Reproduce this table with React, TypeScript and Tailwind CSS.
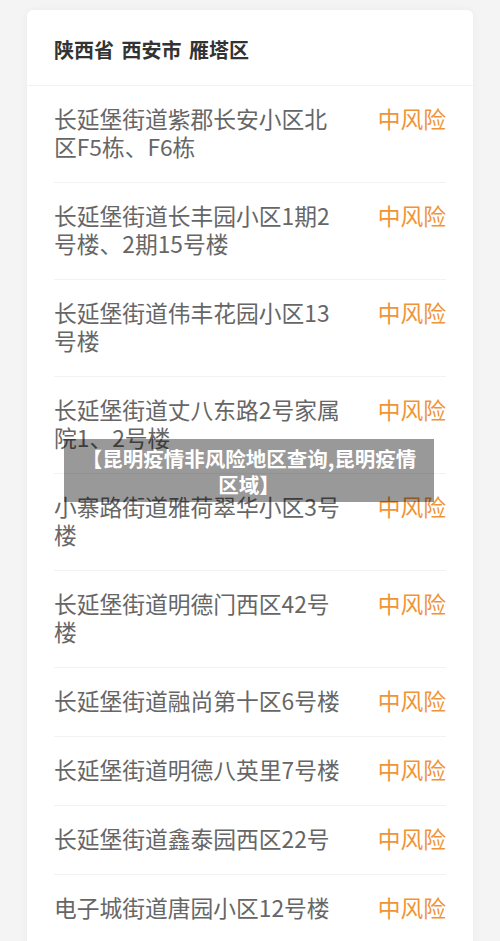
const rows = [
  "长延堡街道紫郡长安小区北区F5栋、F6栋",
  "长延堡街道长丰园小区1期2号楼、2期15号楼",
  "长延堡街道伟丰花园小区13号楼",
  "长延堡街道丈八东路2号家属院1、2号楼",
  "小寨路街道雅荷翠华小区3号楼",
  "长延堡街道明德门西区42号楼",
  "长延堡街道融尚第十区6号楼",
  "长延堡街道明德八英里7号楼",
  "长延堡街道鑫泰园西区22号",
  "电子城街道唐园小区12号楼",
]

export default function App() {
  return (
    <main
      className="relative h-[941px] overflow-hidden bg-[#f4f4f4] px-[27px] pt-[10px]"
      style={{ fontFamily: '"Noto Sans CJK SC", "Noto Sans", sans-serif' }}
    >
      <div className="min-h-[960px] rounded-[6px] bg-white shadow-[0_0_8px_rgba(0,0,0,0.04)]">
        {/* header */}
        <div className="border-b border-[#f2f2f2] px-[27px] pt-[26px] pb-[21px]">
          <h1 className="text-[20px] font-bold leading-[28px] text-[#333] [word-spacing:3px]">
            陕西省 西安市 雁塔区
          </h1>
        </div>

        {/* list */}
        <div className="px-[27px]">
          {rows.map((r, i) => (
            <div
              key={i}
              className="flex items-start justify-between border-b border-[#f2f2f2] pt-[19px] pb-[21px]"
            >
              <p className="w-[294px] text-[22.75px] leading-[28px] text-[#666]">{r}</p>
              <span className="text-[22.75px] leading-[28px] text-[#f09437]">中风险</span>
            </div>
          ))}
        </div>
      </div>

      {/* title overlay */}
      <div className="absolute left-[64px] top-[439px] flex h-[63px] w-[370px] items-center justify-center bg-black/40 px-[6px]">
        <p className="w-full text-center text-[20.5px] font-bold leading-[26px] text-white">
          【昆明疫情非风险地区查询,昆明疫情<br />区域】
        </p>
      </div>
    </main>
  )
}
